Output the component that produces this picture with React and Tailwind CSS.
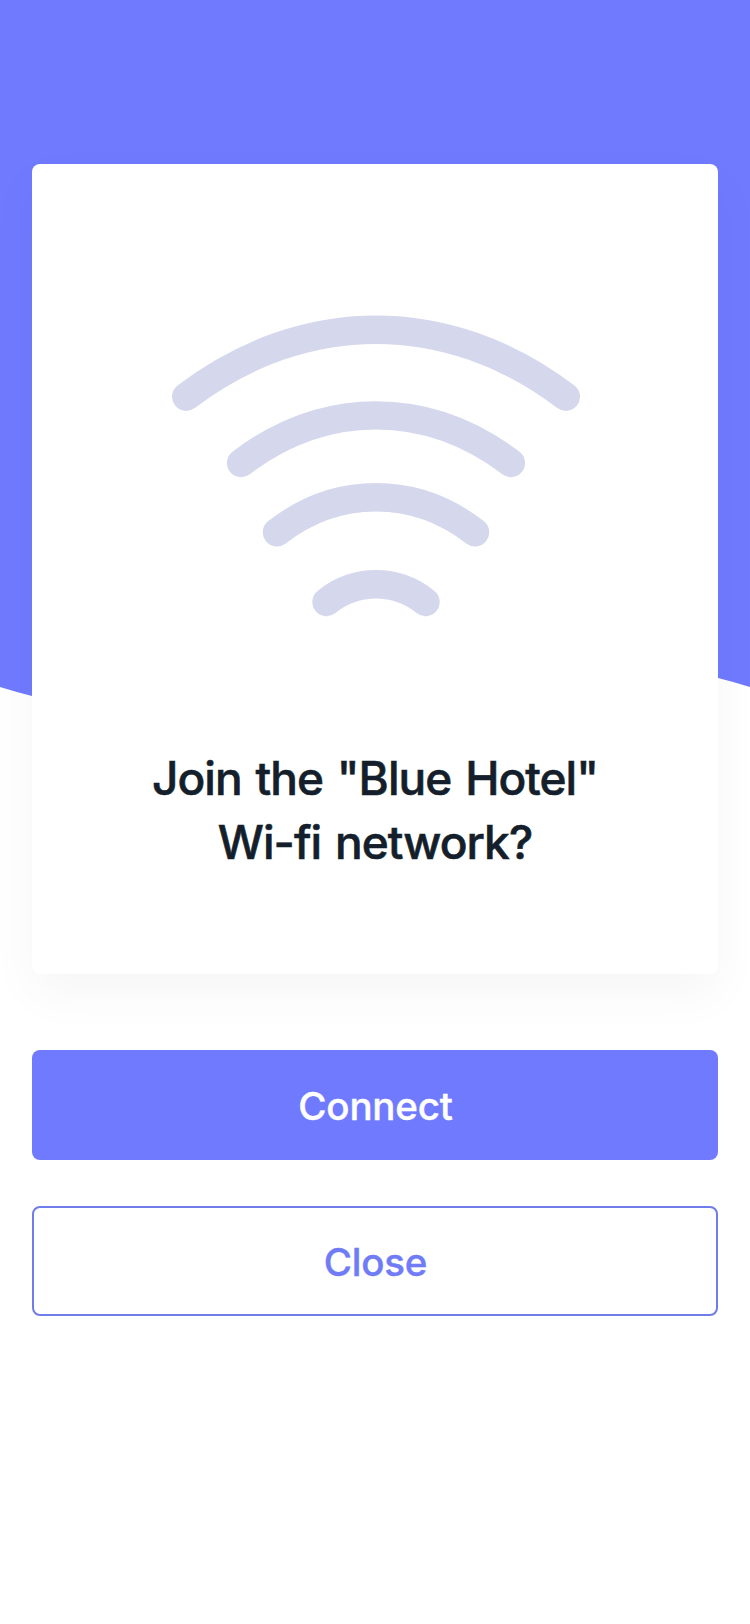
function WifiIcon() {
  return (
    <svg className="block h-[302px] w-[410px]" viewBox="170 315 410 302" fill="none" stroke="#d5d7ed" strokeWidth="28.4" strokeLinecap="round">
      <path d="M186.2 396.7c117.5 -89.3 262.1 -89.3 379.6 0" />
      <path d="M241.1 463c83.6 -63.5 186.2 -63.5 269.8 0" />
      <path d="M277 532.3c60 -46.7 138 -46.7 198 0" />
      <path d="M326.5 602c29 -23.6 70 -23.6 99 0" />
    </svg>
  );
}

export default function App() {
  return (
    <div className="relative isolate min-h-[1624px] w-[750px] overflow-hidden bg-white px-8 pt-[164px] font-['Inter','Liberation_Sans',sans-serif]">
      <svg className="absolute left-0 top-0 -z-10 h-[720px] w-[750px]" viewBox="0 0 750 720">
        <path d="M0 0H750V687Q734 682 718 678C610 650 500 720 375 724C250 730 140 728 32 696Q16 692 0 687Z" fill="#707aff" />
      </svg>

      <main className="flex flex-col">
        <section className="flex h-[810px] flex-col items-center rounded-lg bg-white pt-[151px] shadow-[0_20px_50px_rgba(0,0,0,0.04)]">
          <WifiIcon />
          <h1 className="mt-[129px] text-center text-[46px] font-medium leading-[64px] tracking-[-0.95px] text-[#141f2b] [-webkit-text-stroke:0.6px_#141f2b] [word-spacing:2.5px]">
            <span className="block whitespace-nowrap">Join the "Blue Hotel"</span>
            <span className="block whitespace-nowrap">Wi-fi network?</span>
          </h1>
        </section>

        <button className="mt-[76px] h-[110px] rounded-lg bg-[#707aff] pl-[1px] pt-[3px] text-[38.5px] font-medium leading-none tracking-[-0.2px] text-white [-webkit-text-stroke:0.4px_#ffffff]">
          Connect
        </button>
        <button className="mt-[46px] h-[110px] rounded-lg border-2 border-[#707cea] bg-white pl-[1px] pt-[3px] text-[38.5px] font-medium leading-none tracking-[-0.2px] text-[#707cf5] [-webkit-text-stroke:0.4px_#707cf5]">
          Close
        </button>
      </main>
    </div>
  );
}
